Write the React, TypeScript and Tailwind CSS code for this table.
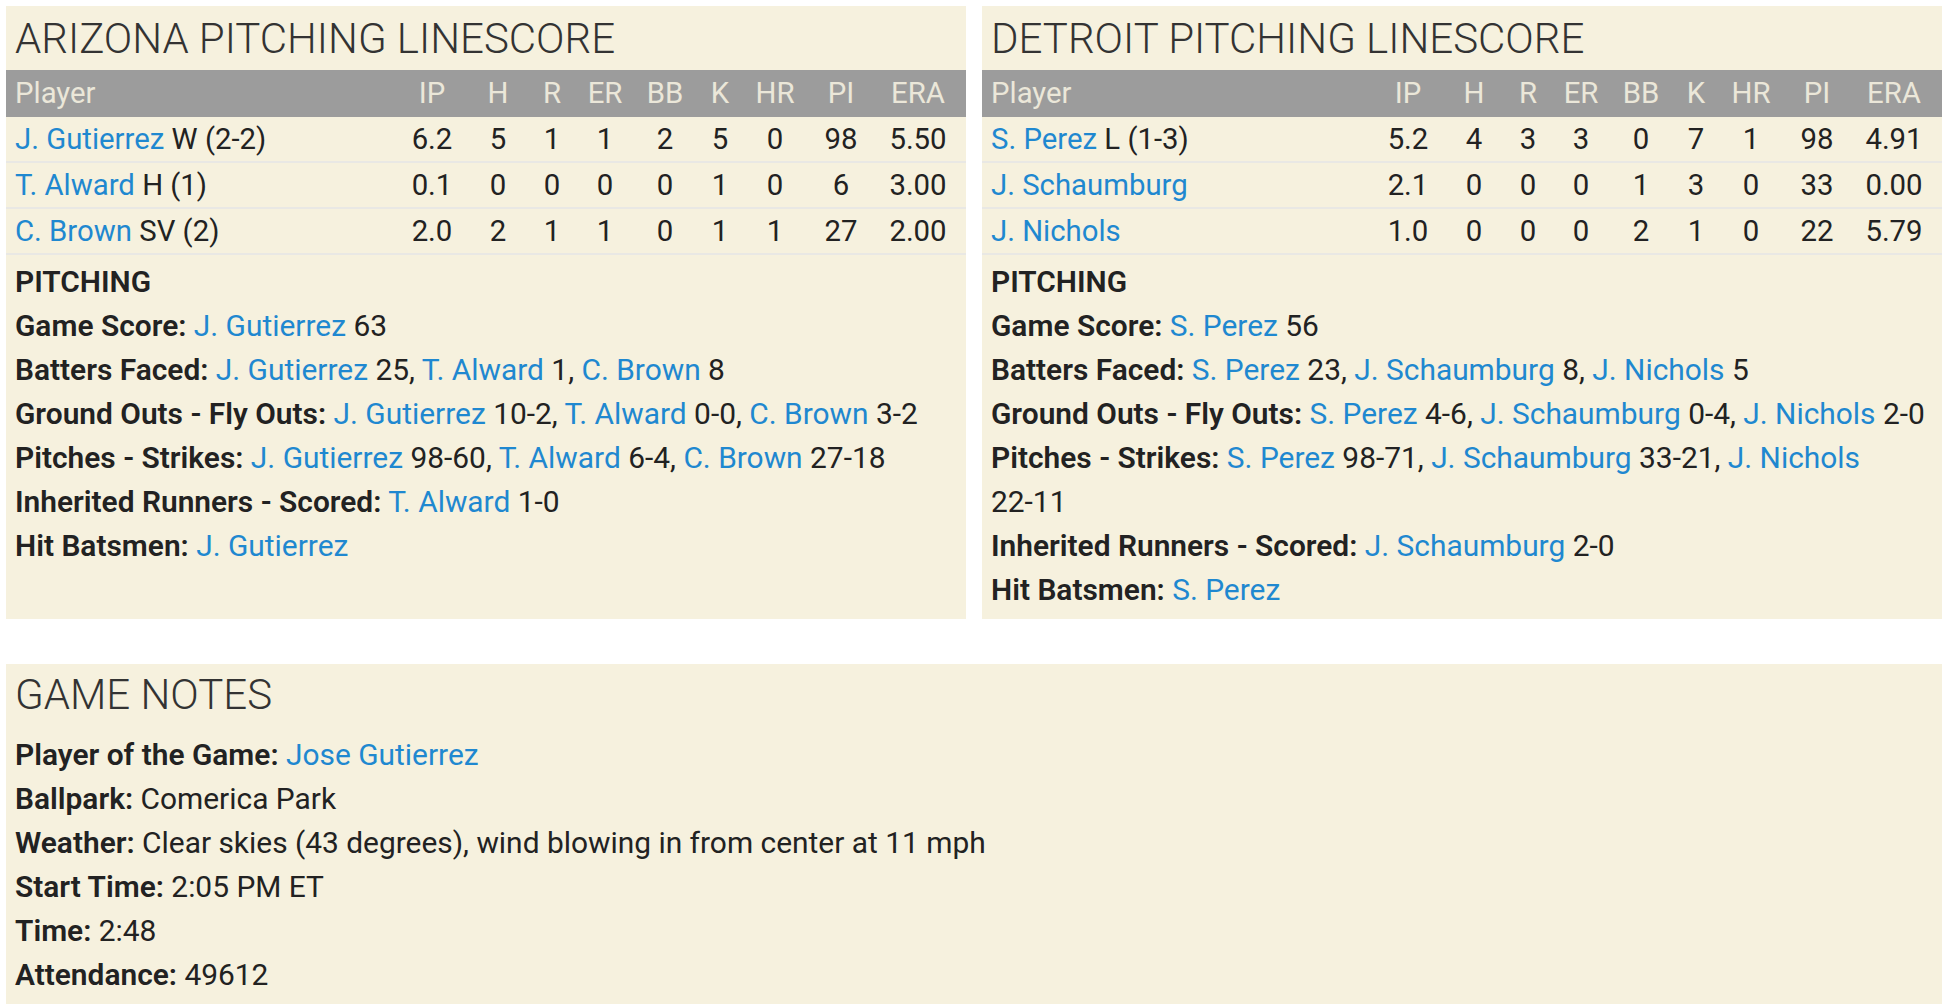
type Part = { t: string; link?: boolean };

type Pitcher = { name: string; note?: string; stats: string[] };

const cols = ['IP', 'H', 'R', 'ER', 'BB', 'K', 'HR', 'PI', 'ERA'];

const grid =
  'grid grid-cols-[1fr_66px_66px_42px_64px_56px_54px_56px_76px_78px] items-center px-[9px]';

const arizona: Pitcher[] = [
  { name: 'J. Gutierrez', note: 'W (2-2)', stats: ['6.2', '5', '1', '1', '2', '5', '0', '98', '5.50'] },
  { name: 'T. Alward', note: 'H (1)', stats: ['0.1', '0', '0', '0', '0', '1', '0', '6', '3.00'] },
  { name: 'C. Brown', note: 'SV (2)', stats: ['2.0', '2', '1', '1', '0', '1', '1', '27', '2.00'] },
];

const detroit: Pitcher[] = [
  { name: 'S. Perez', note: 'L (1-3)', stats: ['5.2', '4', '3', '3', '0', '7', '1', '98', '4.91'] },
  { name: 'J. Schaumburg', stats: ['2.1', '0', '0', '0', '1', '3', '0', '33', '0.00'] },
  { name: 'J. Nichols', stats: ['1.0', '0', '0', '0', '2', '1', '0', '22', '5.79'] },
];

const L = (t: string): Part => ({ t, link: true });
const T = (t: string): Part => ({ t });

const arizonaNotes: [string, Part[]][] = [
  ['Game Score:', [L('J. Gutierrez'), T(' 63')]],
  ['Batters Faced:', [L('J. Gutierrez'), T(' 25, '), L('T. Alward'), T(' 1, '), L('C. Brown'), T(' 8')]],
  ['Ground Outs - Fly Outs:', [L('J. Gutierrez'), T(' 10-2, '), L('T. Alward'), T(' 0-0, '), L('C. Brown'), T(' 3-2')]],
  ['Pitches - Strikes:', [L('J. Gutierrez'), T(' 98-60, '), L('T. Alward'), T(' 6-4, '), L('C. Brown'), T(' 27-18')]],
  ['Inherited Runners - Scored:', [L('T. Alward'), T(' 1-0')]],
  ['Hit Batsmen:', [L('J. Gutierrez')]],
];

const detroitNotes: [string, Part[]][] = [
  ['Game Score:', [L('S. Perez'), T(' 56')]],
  ['Batters Faced:', [L('S. Perez'), T(' 23, '), L('J. Schaumburg'), T(' 8, '), L('J. Nichols'), T(' 5')]],
  ['Ground Outs - Fly Outs:', [L('S. Perez'), T(' 4-6, '), L('J. Schaumburg'), T(' 0-4, '), L('J. Nichols'), T(' 2-0')]],
  ['Pitches - Strikes:', [L('S. Perez'), T(' 98-71, '), L('J. Schaumburg'), T(' 33-21, '), L('J. Nichols'), T(' 22-11')]],
  ['Inherited Runners - Scored:', [L('J. Schaumburg'), T(' 2-0')]],
  ['Hit Batsmen:', [L('S. Perez')]],
];

// keeps scores like "22-11" from breaking at the hyphen
function Plain({ t }: { t: string }) {
  const m = t.match(/^(\s*)(.*?)(\s*)$/) ?? ['', '', t, ''];
  return (
    <>
      {m[1]}
      <span className="whitespace-nowrap">{m[2]}</span>
      {m[3]}
    </>
  );
}

function Line({ label, parts }: { label: string; parts: Part[] }) {
  return (
    <p>
      <span className="font-semibold">{label}</span>{' '}
      {parts.map((p, i) =>
        p.link ? (
          <a key={i} className="text-[#1f88d0]">
            {p.t}
          </a>
        ) : (
          <Plain key={i} t={p.t} />
        ),
      )}
    </p>
  );
}

function Linescore({ title, pitchers, notes }: { title: string; pitchers: Pitcher[]; notes: [string, Part[]][] }) {
  return (
    <section className="flex-1 bg-[#f6f1de]">
      <h2 className="px-[9px] pt-[9px] pb-[7px] text-[42px] leading-[48px] font-light text-[#333]">{title}</h2>
      <div className={clsxGrid('h-[47px] bg-[#9c9c9c] text-[29.33px] text-[#ebe7d9]')}>
        <span>Player</span>
        {cols.map((c) => (
          <span key={c} className="text-center">
            {c}
          </span>
        ))}
      </div>
      {pitchers.map((p) => (
        <div key={p.name} className={clsxGrid('h-[46px] border-b-2 border-[#e9e8e4] text-[29.33px] leading-[44px]')}>
          <span className="whitespace-nowrap">
            <a className="text-[#1f88d0]">{p.name}</a>
            {p.note && ' ' + p.note}
          </span>
          {p.stats.map((s, i) => (
            <span key={i} className="text-center">
              {s}
            </span>
          ))}
        </div>
      ))}
      <div className="px-[9px] pt-[5px] pb-[7px] text-[29.9px] leading-[44px]">
        <p className="font-semibold">PITCHING</p>
        {notes.map(([label, parts]) => (
          <Line key={label} label={label} parts={parts} />
        ))}
      </div>
    </section>
  );
}

function clsxGrid(extra: string) {
  return grid + ' ' + extra;
}

export default function App() {
  return (
    <div className="min-h-[1006px] bg-white px-[6px] pt-[6px] font-[Roboto,sans-serif] text-[#222]">
      <div className="flex gap-4">
        <Linescore title="ARIZONA PITCHING LINESCORE" pitchers={arizona} notes={arizonaNotes} />
        <Linescore title="DETROIT PITCHING LINESCORE" pitchers={detroit} notes={detroitNotes} />
      </div>
      <section className="mt-[45px] bg-[#f6f1de] px-[9px] pt-[7px] pb-[7px] text-[29.9px] leading-[44px]">
        <h2 className="mb-[14px] text-[42px] leading-[48px] font-light text-[#333]">GAME NOTES</h2>
        <Line label="Player of the Game:" parts={[L('Jose Gutierrez')]} />
        <Line label="Ballpark:" parts={[T('Comerica Park')]} />
        <Line label="Weather:" parts={[T('Clear skies (43 degrees), wind blowing in from center at 11 mph')]} />
        <Line label="Start Time:" parts={[T('2:05 PM ET')]} />
        <Line label="Time:" parts={[T('2:48')]} />
        <Line label="Attendance:" parts={[T('49612')]} />
      </section>
    </div>
  );
}
